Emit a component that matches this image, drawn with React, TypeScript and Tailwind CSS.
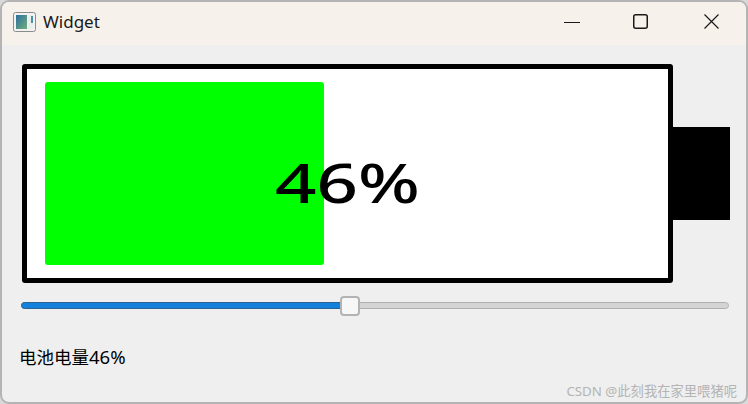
function WidgetIcon() {
    return (
        <svg width="23" height="20" viewBox="0 0 23 20" className="shrink-0">
            <defs>
                <linearGradient id="pane" x1="0" y1="0" x2="1" y2="1">
                    <stop offset="0" stopColor="#2f6f9f" />
                    <stop offset="1" stopColor="#6fae7c" />
                </linearGradient>
            </defs>
            <rect x="0.5" y="0.5" width="22" height="19" rx="2" fill="#f2f2f2" stroke="#8c8c8c" />
            <rect x="3" y="3" width="11" height="14" fill="url(#pane)" />
            <rect x="15" y="3" width="5" height="14" fill="#e8eeeb" />
            <rect x="18" y="4" width="2" height="7" fill="#4d8fa5" />
        </svg>
    );
}

export default function App() {
    const level = 46;

    return (
        <div className="w-[748px] h-[404px] bg-[#d9d9d9] overflow-hidden" style={{ fontFamily: '"Noto Sans", "Noto Sans CJK SC", sans-serif' }}>
            <div className="w-full h-full flex flex-col border-2 border-[#b4b4b4] rounded-[9px] overflow-hidden bg-[#efefef]">
                <div className="h-[43px] shrink-0 flex items-center bg-[#f7f1eb] pl-[11px] pb-[4px]">
                    <WidgetIcon />
                    <span className="ml-[7px] text-[17px] text-[#1a1a1a]">Widget</span>
                    <div className="ml-auto flex items-center text-[#1a1a1a] mr-[27px]">
                        <svg width="16" height="16" viewBox="0 0 16 16" fill="none" stroke="currentColor">
                            <path d="M0 8.5H16" strokeWidth="1" />
                        </svg>
                        <svg width="15" height="15" viewBox="0 0 15 15" fill="none" stroke="currentColor" className="ml-[53px]">
                            <rect x="0.75" y="0.75" width="13.5" height="13.5" rx="2" strokeWidth="1.5" />
                        </svg>
                        <svg width="15" height="15" viewBox="0 0 15 15" fill="none" stroke="currentColor" className="ml-[56px]">
                            <path d="M0.5 0.5L14.5 14.5M14.5 0.5L0.5 14.5" strokeWidth="1.2" />
                        </svg>
                    </div>
                </div>

                <div className="flex-1 flex flex-col pl-[18px] pt-[19px]">
                    <div className="flex items-center ml-[2px]">
                        <div className="relative w-[651px] h-[219px] shrink-0 border-[5px] border-black rounded-[3px] bg-white p-[13px] pl-[18px]">
                            <div className="w-[279px] h-full bg-[#00ff00] rounded-[3px]" />
                            <span className="absolute left-0 right-0 top-[85px] text-center text-[55px] leading-[55px] font-medium text-black scale-x-[1.32]">
                                {level}%
                            </span>
                        </div>
                        <div className="relative w-[62px] h-[93px] -ml-[5px] shrink-0 bg-black" />
                    </div>

                    <div className="relative w-[708px] h-[7px] mt-[19px] ml-[1px] rounded-full bg-[#d4d4d4] border border-[#b0b0b0]">
                        <div className="h-full w-[322px] rounded-l-full bg-[#1380dc] -m-px box-content border border-[#2a6496]" />
                        <div className="absolute left-[318px] -top-[7px] w-[20px] h-[20px] rounded-[4px] bg-[#f7f7f7] border-2 border-[#b3b3b3]" />
                    </div>

                    <div className="mt-[37px] -ml-[1px] text-[17.5px] leading-[22px] text-black">
                        电池电量<span className="text-[18.5px]">{level}%</span>
                    </div>

                    <div className="flex justify-end mt-[15px] pr-[9px] text-[13.3px] leading-[16px] text-[#b4b4b4]">CSDN @此刻我在家里喂猪呢</div>
                </div>
            </div>
        </div>
    );
}
